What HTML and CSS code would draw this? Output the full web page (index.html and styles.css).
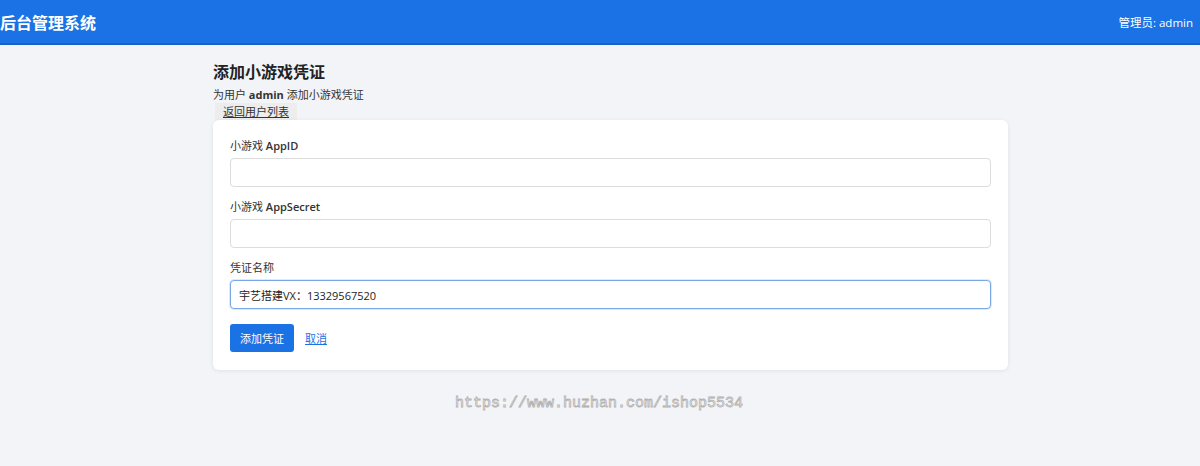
FILE: index.html
```html
<!DOCTYPE html>
<html lang="zh-CN">
<head>
  <meta charset="UTF-8">
  <meta name="viewport" content="width=device-width, initial-scale=1.0">
  <title>添加小游戏凭证 - 后台管理系统</title>
  <link rel="stylesheet" href="styles.css">
</head>
<body>
  <header class="topbar">
    <div class="brand">后台管理系统</div>
    <div class="user">管理员: admin</div>
  </header>

  <main class="page">
    <h1>添加小游戏凭证</h1>
    <p class="subtitle">为用户 <strong>admin</strong> 添加小游戏凭证</p>
    <a href="#" class="back">返回用户列表</a>

    <div class="card">
      <form>
        <div class="field">
          <label for="appid">小游戏 <span class="en">AppID</span></label>
          <input type="text" id="appid">
        </div>
        <div class="field">
          <label for="secret">小游戏 <span class="en">AppSecret</span></label>
          <input type="text" id="secret">
        </div>
        <div class="field">
          <label for="name">凭证名称</label>
          <input type="text" id="name" class="focus" value="宇艺搭建VX：13329567520">
        </div>
        <div class="actions">
          <button type="submit" class="primary">添加凭证</button>
          <a href="#" class="cancel">取消</a>
        </div>
      </form>
    </div>

    <div class="mark">https://www.huzhan.com/ishop5534</div>
  </main>
</body>
</html>
```

FILE: styles.css
```css
body {
  margin: 0;
  font-family: "Open Sans", "Noto Sans CJK SC", sans-serif;
  font-size: 11px;
  color: #333;
  background-color: #f3f4f7;
}
.topbar {
  height: 43px;
  background-color: #1b72e4;
  border-bottom: 2px solid #1762c9;
  color: #fff;
  display: flex;
  align-items: center;
  justify-content: space-between;
  padding: 0 7px 0 0;
}
.brand {
  font-size: 16px;
  font-weight: 700;
}
.user {
  font-size: 11.5px;
}
.page {
  width: 795px;
  margin-left: 213px;
  padding-top: 15px;
}
h1 {
  margin: 0;
  font-size: 16px;
  font-weight: 700;
  color: #222;
  line-height: 24px;
}
.subtitle {
  margin: 2px 0 0;
  line-height: 17px;
  color: #333;
}
.subtitle strong {
  font-weight: 700;
}
.back {
  display: block;
  width: fit-content;
  margin: 0 0 -1px 2px;
  padding: 0 8px;
  line-height: 18px;
  font-size: 11px;
  color: #333;
  background-color: #ededee;
}
.card {
  background-color: #fff;
  border-radius: 6px;
  box-shadow: 0 1px 4px rgba(0, 0, 0, 0.08);
  padding: 18px 17px;
}
.field {
  margin-bottom: 12px;
}
.field label {
  display: block;
  line-height: 16px;
  margin-bottom: 4px;
  font-size: 11px;
}
.field .en {
  font-weight: 600;
}
.field input {
  display: block;
  box-sizing: border-box;
  width: 100%;
  height: 29px;
  border: 1px solid #dcdcdc;
  border-radius: 4px;
  padding: 0 8px;
  font-family: "Open Sans", "Noto Sans CJK SC", sans-serif;
  font-size: 11px;
  color: #222;
  outline: none;
}
.field input.focus {
  border-color: #7aa7e6;
  box-shadow: 0 0 0 1px rgba(27, 114, 228, 0.15);
}
.actions {
  display: flex;
  align-items: center;
  gap: 11px;
  padding-top: 3px;
}
.primary {
  height: 28px;
  padding: 0 10px;
  border: none;
  border-radius: 3px;
  background-color: #1b72e4;
  color: #fff;
  font-family: "Open Sans", "Noto Sans CJK SC", sans-serif;
  font-size: 11px;
}
.cancel {
  color: #1b72e4;
  font-size: 11px;
}
.mark {
  margin: 25px 0 0 242px;
  font-family: "Liberation Mono", "DejaVu Sans Mono", monospace;
  font-size: 15px;
  color: #fff;
  -webkit-text-stroke: 0.8px #b0b0b0;
}
```
